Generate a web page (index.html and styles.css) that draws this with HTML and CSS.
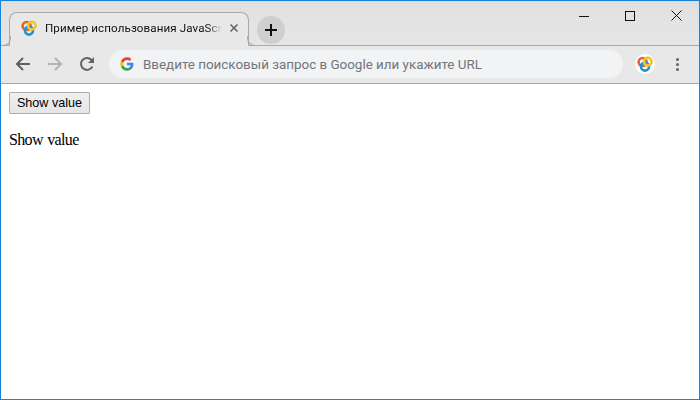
FILE: index.html
```html
<!DOCTYPE html>
<html lang="ru">
<head>
<meta charset="utf-8">
<title>Пример использования JavaScript</title>
<link rel="stylesheet" href="styles.css">
</head>
<body>
<div class="window">
  <div class="tabstrip">
    <div class="tab">
      <svg class="favicon" width="16" height="16" viewBox="0 0 16 16" fill="none" stroke-width="2.6">
        <circle cx="5.6" cy="6" r="4" stroke="#e8622c"/>
        <circle cx="8" cy="10.6" r="4" stroke="#1e93d6"/>
        <circle cx="10.8" cy="5.6" r="3.8" stroke="#f5c32c"/>
      </svg>
      <span class="tab-title">Пример использования JavaScr</span>
      <svg class="tab-close" width="10" height="10" viewBox="0 0 10 10" stroke="#5f6368" stroke-width="1.5"><path d="M1.500 1.500l7 7M8.500 1.500l-7 7"/></svg>
    </div>
    <div class="new-tab">
      <svg width="14" height="14" viewBox="0 0 14 14" stroke="#111" stroke-width="2"><path d="M7 1v12M1 7h12"/></svg>
    </div>
    <div class="win-controls">
      <svg class="win-btn" width="10" height="10" viewBox="0 0 10 10" stroke="#111" stroke-width="1"><path d="M0 5.5h10"/></svg>
      <svg class="win-btn" width="10" height="10" viewBox="0 0 10 10" fill="none" stroke="#111" stroke-width="1"><rect x=".5" y=".5" width="9" height="9"/></svg>
      <svg class="win-btn" width="11" height="11" viewBox="0 0 11 11" stroke="#111" stroke-width="1"><path d="M.5.5l10 10M10.500.5l-10 10"/></svg>
    </div>
  </div>
  <div class="toolbar">
    <svg class="nav" width="16" height="16" viewBox="0 0 16 16" fill="none" stroke="#5f6368" stroke-width="2"><path d="M15 8H2M8 2L2 8l6 6"/></svg>
    <svg class="nav" width="16" height="16" viewBox="0 0 16 16" fill="none" stroke="#b0b2b5" stroke-width="2"><path d="M1 8h13M8 2l6 6-6 6"/></svg>
    <svg class="nav" width="16" height="16" viewBox="0 0 16 16" fill="none" stroke="#5f6368" stroke-width="2"><path d="M13.400 10.500A6 6 0 1 1 12.300 3.700L14 5.400"/><path d="M15 1v6H9z" fill="#5f6368" stroke="none"/></svg>
    <div class="omnibox">
      <svg class="g-logo" width="14" height="14" viewBox="0 0 48 48">
        <path fill="#4285f4" d="M46 24.500c0-1.600-.1-3.100-.4-4.500H24v8.500h12.400c-.5 2.900-2.100 5.300-4.600 7v5.800h7.400C43.500 37.800 46 31.700 46 24.500z"/>
        <path fill="#34a853" d="M24 47c6.200 0 11.400-2.100 15.200-5.600l-7.400-5.800c-2.100 1.400-4.700 2.200-7.800 2.200-6 0-11-4-12.800-9.500H3.500v6C7.300 41.800 15 47 24 47z"/>
        <path fill="#fbbc05" d="M11.200 28.300c-.5-1.400-.7-2.800-.7-4.300s.3-3 .7-4.300v-6H3.500C2 16.800 1 20.300 1 24s.9 7.200 2.500 10.300l7.700-6z"/>
        <path fill="#ea4335" d="M24 10.200c3.400 0 6.400 1.200 8.800 3.400l6.600-6.600C35.400 3.300 30.200 1 24 1 15 1 7.300 6.200 3.500 13.700l7.700 6c1.800-5.500 6.800-9.500 12.800-9.500z"/>
      </svg>
      <span class="placeholder">Введите поисковый запрос в Google или укажите URL</span>
    </div>
    <div class="profile">
      <svg width="16" height="16" viewBox="0 0 16 16" fill="none" stroke-width="2.600">
        <circle cx="5.600" cy="6" r="4" stroke="#e8622c"/>
        <circle cx="8" cy="10.600" r="4" stroke="#1e93d6"/>
        <circle cx="10.800" cy="5.600" r="3.800" stroke="#f5c32c"/>
      </svg>
    </div>
    <div class="menu"><i></i><i></i><i></i></div>
  </div>
  <main class="page">
    <button class="show-btn" type="button">Show value</button>
    <p class="value">Show value</p>
  </main>
</div>
</body>
</html>
```
FILE: styles.css
```css
* { box-sizing: border-box; }
html, body { margin: 0; padding: 0; height: 100%; overflow: hidden; }
.window {
  width: 700px;
  height: 400px;
  border: 1px solid #1883d7;
  display: flex;
  flex-direction: column;
  background: #fff;
}
.tabstrip {
  height: 45px;
  flex: none;
  display: flex;
  align-items: flex-end;
  padding-left: 8px;
  background: linear-gradient(#e0e0e0, #e6e6e6);
  border-top: 1px solid #dcdcdc;
  border-bottom: 1px solid #a9a9a9;
}
.tab {
  width: 240px;
  height: 34px;
  display: flex;
  align-items: center;
  padding: 0 8px 3px 11px;
  background: #e8e8e8;
  border: 1px solid #a9a9a9;
  border-bottom: 0;
  border-radius: 8px 8px 0 0;
  margin-bottom: -1px;
  position: relative;
  z-index: 1;
}
.tab::before,
.tab::after {
  content: "";
  position: absolute;
  bottom: 0;
  width: 9px;
  height: 9px;
  background: transparent;
  border-bottom: 1px solid #a9a9a9;
}
.tab::before {
  left: -9px;
  border-right: 1px solid #a9a9a9;
  border-bottom-right-radius: 8px;
}
.tab::after {
  right: -9px;
  border-left: 1px solid #a9a9a9;
  border-bottom-left-radius: 8px;
}
.favicon { flex: none; }
.tab-title {
  flex: 1;
  margin-left: 8px;
  width: 0;
  overflow: hidden;
  white-space: nowrap;
  font: 11.6px/16px Roboto, sans-serif;
  letter-spacing: 0.1px;
  color: #111;
  -webkit-mask-image: linear-gradient(90deg, #000 92%, transparent);
  mask-image: linear-gradient(90deg, #000 92%, transparent);
}
.tab-close { flex: none; margin-left: 7px; margin-right: 1px; }
.new-tab {
  width: 28px;
  height: 28px;
  margin: 0 0 1px 8px;
  border-radius: 50%;
  background: #cfcfcf;
  display: flex;
  align-items: center;
  justify-content: center;
  align-self: flex-end;
}
.win-controls {
  margin-left: auto;
  align-self: flex-start;
  display: flex;
  align-items: center;
  gap: 36px;
  padding: 8px 17px 0 0;
}
.win-btn { display: block; }
.toolbar {
  height: 38px;
  flex: none;
  display: flex;
  align-items: center;
  background: #e8e8e8;
  border-bottom: 1px solid #a8a8a8;
  padding: 0 14px 1px 14px;
}
.nav { flex: none; margin-right: 16px; }
.nav:nth-child(3) { margin-right: 14px; }
.omnibox {
  flex: none;
  width: 514px;
  height: 28px;
  border-radius: 14px;
  background: #f1f3f4;
  display: flex;
  align-items: center;
  padding-left: 11px;
}
.g-logo { flex: none; }
.placeholder {
  margin-left: 9px;
  padding-top: 2px;
  font: 13.4px/18px Roboto, sans-serif;
  color: #72767a;
  white-space: nowrap;
}
.profile {
  width: 20px;
  height: 20px;
  margin-left: 12px;
  border-radius: 50%;
  background: #fff;
  display: flex;
  align-items: center;
  justify-content: center;
}
.menu {
  margin-left: 21px;
  display: flex;
  flex-direction: column;
  gap: 2px;
}
.menu i {
  display: block;
  width: 3px;
  height: 3px;
  background: #5f6368;
  border-radius: 50%;
}
.page { flex: 1; padding: 8px; }
.show-btn {
  display: block;
  width: 81px;
  height: 22px;
  padding: 0;
  border: 1px solid #adadad;
  border-radius: 1px;
  background: linear-gradient(#f0f0f0, #e5e5e5);
  font: 12.6px "Liberation Sans", Arial, sans-serif;
  color: #000;
}
.value {
  margin: 17px 0 0;
  font: 16px/18px "Liberation Serif", "Times New Roman", serif;
  letter-spacing: -0.65px;
  word-spacing: 1px;
  color: #000;
}
```
